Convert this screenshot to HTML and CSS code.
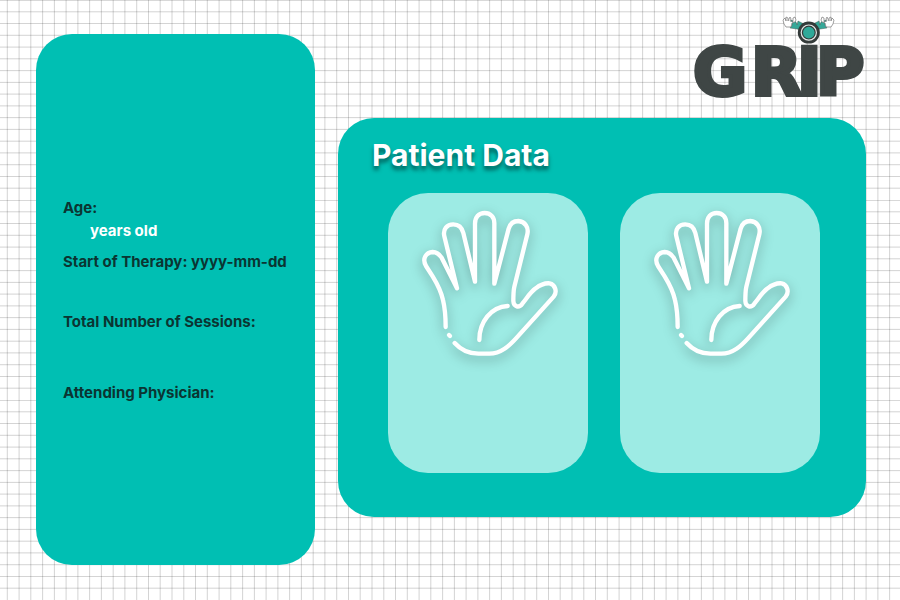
FILE: index.html
```html
<!DOCTYPE html>
<html lang="en">
<head>
<meta charset="utf-8">
<meta name="viewport" content="width=device-width, initial-scale=1">
<title>GRIP - Patient Data</title>
<link rel="stylesheet" href="styles.css">
</head>
<body>
<svg class="backdrop" aria-hidden="true">
  <defs>
    <pattern id="grid" width="200" height="200" patternUnits="userSpaceOnUse">
      <path fill="none" stroke="#000" stroke-opacity=".17" d="M7.3 0v200M19.1 0v200M30.8 0v200M42.6 0v200M54.4 0v200M66.1 0v200M77.9 0v200M89.6 0v200M101.4 0v200M113.2 0v200M124.9 0v200M136.7 0v200M148.5 0v200M160.2 0v200M172 0v200M183.8 0v200M195.5 0v200M0 .4h200M0 11.8h200M0 23.5h200M0 35.3h200M0 47.1h200M0 58.8h200M0 70.6h200M0 82.4h200M0 94.1h200M0 105.9h200M0 117.6h200M0 129.4h200M0 141.2h200M0 152.9h200M0 164.7h200M0 176.5h200M0 188.2h200"/>
    </pattern>
    <symbol id="hand" viewBox="51 42 420 444">
      <g fill="none" stroke="#fff" stroke-width="13" stroke-linecap="round" stroke-linejoin="round">
        <path d="M134 396C134 370 132 340 126 315C120 287 106 262 95 244L75 213C62 190 76 172 95 171C108 171 116 179 122 188L168 280L130 124C125 102 138 88 157 88C172 88 183 98 187 114L222 260V86C222 66 234 54 251 54C268 54 280 66 280 84V266L323 101C328 84 340 78 352 78C372 80 384 96 379 118L340 275C337 288 337 303 337 318C338 336 354 340 364 326C380 306 388 292 404 280C418 269 434 264 446 265C462 268 470 290 458 305L345 430C325 452 300 476 265 476H232C205 476 180 465 161 444"/>
        <path d="M144 420L147 423"/>
        <path d="M235 435C235 380 270 336 320 333"/>
      </g>
    </symbol>
  </defs>
  <rect width="100%" height="100%" fill="url(#grid)"/>
</svg>
<main class="page">
  <aside class="profile">
    <dl class="facts">
      <dt>Age:</dt>
      <dd class="age">years old</dd>
      <dt class="start">Start of Therapy: yyyy-mm-dd</dt>
      <dt class="sessions">Total Number of Sessions:</dt>
      <dt class="physician">Attending Physician:</dt>
    </dl>
  </aside>
  <div class="content">
    <header class="brand">
      <svg class="logo" viewBox="686 16 180 84" role="img" aria-label="GRIP">
        <text class="wordmark" y="95" x="693 751 797 816">GRIP</text>
        <g id="arm">
          <path fill="#35a898" stroke="#35433f" stroke-width=".4" d="M791 20L796 22L797 25L798 21L804 24L801 30L797 29L790 28L792 25Z"/>
          <path fill="#fff" stroke="#777" stroke-width=".7" stroke-linejoin="round" d="M791 27L786 27L784 24L783 20L785 18L786 21L786 17L788 18L788 21L790 17L791 19L790 21L793 22L793 18L795 17L796 20L795 22L792 23Z"/>
        </g>
        <use href="#arm" transform="translate(1617 0) scale(-1 1)"/>
        <circle cx="808.8" cy="32.6" r="11" fill="#343b3a"/>
        <circle cx="808.8" cy="32.6" r="7.6" fill="#343b3a" stroke="#e4e8e7" stroke-width="1.2"/>
        <circle cx="808.8" cy="32.6" r="5.8" fill="#2fa999"/>
      </svg>
    </header>
    <section class="patient" aria-labelledby="patient-title">
      <h1 id="patient-title">Patient Data</h1>
      <div class="hands">
        <div class="card"><svg class="hand" role="img" aria-label="Left hand"><use href="#hand"/></svg></div>
        <div class="card"><svg class="hand" role="img" aria-label="Right hand"><use href="#hand"/></svg></div>
      </div>
    </section>
  </div>
</main>
</body>
</html>
```
FILE: styles.css
```css
* {
  box-sizing: border-box;
}

body {
  margin: 0;
  background: #fff;
  color: #0b3532;
  font-family: Inter, sans-serif;
}

.backdrop {
  position: fixed;
  inset: 0;
  z-index: -1;
  width: 100%;
  height: 100%;
}

.page {
  display: grid;
  grid-template-columns: 279fr 528fr;
  gap: 23px;
  min-height: 100vh;
  padding: 0 34px 0 36px;
}

.profile {
  margin: 34px 0 35px;
  padding: 164px 0 0 27px;
  border-radius: 36px;
  background: #00bfb3;
}

.facts {
  margin: 0;
  font-size: 15px;
  font-weight: 700;
  line-height: 20px;
}

.age {
  margin: 3px 0 0 27px;
  color: #fff;
}

.start {
  margin-top: 11px;
}

.sessions {
  margin-top: 40px;
}

.physician {
  margin-top: 51px;
}

.brand {
  display: flex;
  justify-content: flex-end;
  padding: 16px 0 18px;
}

.logo {
  display: block;
  width: 180px;
  height: 84px;
  overflow: visible;
}

.wordmark {
  fill: #3f4645;
  stroke: #3f4645;
  stroke-width: 4px;
  font-family: "DejaVu Sans", sans-serif;
  font-size: 66px;
  font-weight: 700;
}

.patient {
  padding: 18px 46px 44px 50px;
  border-radius: 36px;
  background: #00bfb3;
}

h1 {
  margin: 0 0 19px -16px;
  color: #fff;
  font-size: 30px;
  font-weight: 700;
  line-height: 38px;
  text-shadow: 0 4px 4px rgba(0, 0, 0, 0.5);
}

.hands {
  display: grid;
  grid-template-columns: 1fr 1fr;
  gap: 32px;
}

.card {
  display: flex;
  justify-content: center;
  align-items: flex-start;
  min-height: 280px;
  padding-top: 16px;
  border-radius: 40px;
  background: #9debe4;
}

.hand {
  width: 140px;
  height: 148px;
  overflow: visible;
  filter: drop-shadow(0 4px 6px rgba(0, 0, 0, 0.3));
}
```
